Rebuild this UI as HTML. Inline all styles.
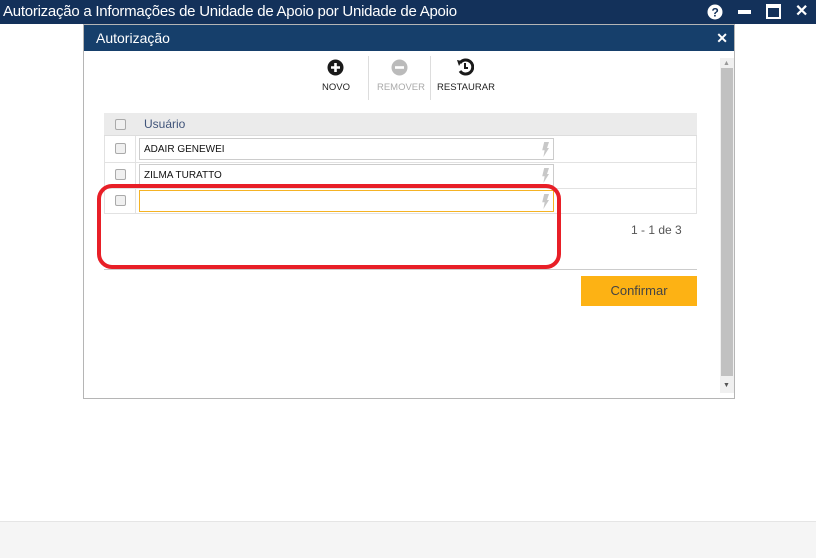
<!DOCTYPE html>
<html><head><meta charset="utf-8"><style>
*{box-sizing:border-box;margin:0;padding:0}
body{width:816px;height:558px;position:relative;background:#fff;font-family:"Liberation Sans",sans-serif;overflow:hidden}
.top{position:absolute;left:0;top:0;width:816px;height:24px;background:#13315a;color:#fff;font-size:15px;line-height:23px;padding-left:3px;letter-spacing:-0.25px}
.dlg{position:absolute;left:83px;top:24px;width:652px;height:375px;border:1px solid #b5b5b5;background:#fff}
.hd{position:absolute;left:0;top:0;width:650px;height:26px;background:#163f6b;color:#fff;font-size:14px;line-height:26px;padding-left:12px}
.abs{position:absolute}
.tb{font-size:9.5px;color:#222;text-align:center}
.cb{position:absolute;width:11px;height:11px;border:1px solid #aaa;border-radius:2px;background:#f0f0f0}
.inp{position:absolute;left:139px;width:415px;height:22px;border:1px solid #ccc;font-size:10px;line-height:22px;padding-left:4px;color:#111}
.bolt{position:absolute;right:4px;top:3px;width:8px;height:15px;background:#c8c8c8;clip-path:polygon(40% 0,100% 0,75% 40%,100% 40%,30% 100%,45% 55%,15% 55%)}
</style></head><body>
<div class="top">Autorização a Informações de Unidade de Apoio por Unidade de Apoio
<svg class="abs" style="left:707px;top:4px" width="16" height="16"><circle cx="8" cy="8" r="7.5" fill="#fff"/><text x="8" y="12.5" font-size="12" font-weight="bold" fill="#13315a" text-anchor="middle" font-family="Liberation Sans">?</text></svg>
<div class="abs" style="left:738px;top:10px;width:13px;height:4px;background:#fff"></div>
<div class="abs" style="left:766px;top:4px;width:15px;height:15px;border:2px solid #fff;border-top-width:4px"></div>
<div class="abs" style="left:795px;top:0;font-weight:bold;font-size:16px">✕</div>
</div>
<div class="dlg">
<div class="hd">Autorização<span class="abs" style="right:6px;top:0;font-weight:bold;font-size:14px">✕</span></div>
<svg class="abs" style="left:243px;top:34px" width="17" height="17"><circle cx="8.5" cy="8.5" r="8" fill="#1a1a1a"/><path d="M8.5 4v9M4 8.5h9" stroke="#fff" stroke-width="2.6"/></svg>
<div class="abs tb" style="left:236px;top:57px;width:32px">NOVO</div>
<div class="abs" style="left:284px;top:31px;width:1px;height:44px;background:#ddd"></div>
<svg class="abs" style="left:307px;top:34px" width="17" height="17"><circle cx="8.5" cy="8.5" r="8" fill="#bbb"/><path d="M4 8.5h9" stroke="#fff" stroke-width="2.6"/></svg>
<div class="abs tb" style="left:292px;top:57px;width:50px;color:#aaa">REMOVER</div>
<div class="abs" style="left:346px;top:31px;width:1px;height:44px;background:#ddd"></div>
<svg class="abs" style="left:372px;top:33px" width="18" height="18"><path d="M4 5A7 7 0 1 1 4 13" fill="none" stroke="#1a1a1a" stroke-width="3"/><path d="M1 2l5 1-3 5z" fill="#1a1a1a"/><path d="M9 5v5h3" fill="none" stroke="#1a1a1a" stroke-width="2"/></svg>
<div class="abs tb" style="left:352px;top:57px;width:60px">RESTAURAR</div>
<div class="abs" style="left:636px;top:33px;width:14px;height:335px;background:#f0f0f0"></div>
<div class="abs" style="left:637px;top:43px;width:12px;height:308px;background:#c1c1c1"></div>
<div class="abs" style="left:639px;top:35px;font-size:7px;color:#999">▲</div>
<div class="abs" style="left:639px;top:357px;font-size:7px;color:#555">▼</div>
</div>
<div class="abs" style="left:104px;top:113px;width:593px;height:23px;background:#ebebeb;border-bottom:1px solid #ddd"></div>
<div class="cb" style="left:115px;top:119px"></div>
<div class="abs" style="left:144px;top:117px;font-size:12px;color:#40547a">Usuário</div>
<div class="abs" style="left:104px;top:136px;width:593px;height:78px;border:1px solid #e2e2e2;border-top:none"></div>
<div class="abs" style="left:104px;top:162px;width:593px;height:1px;background:#e2e2e2"></div>
<div class="abs" style="left:104px;top:188px;width:593px;height:1px;background:#e2e2e2"></div>
<div class="abs" style="left:135px;top:136px;width:1px;height:78px;background:#e2e2e2"></div>
<div class="cb" style="left:115px;top:143px"></div>
<div class="cb" style="left:115px;top:169px"></div>
<div class="cb" style="left:115px;top:195px"></div>
<div class="inp" style="top:138px">ADAIR GENEWEI<div class="bolt"></div></div>
<div class="inp" style="top:164px">ZILMA TURATTO<div class="bolt"></div></div>
<div class="inp" style="top:190px;border-color:#f5b324"><div class="bolt"></div></div>
<div class="abs" style="left:631px;top:223px;font-size:12px;color:#555">1 - 1 de 3</div>
<div class="abs" style="left:104px;top:269px;width:593px;height:1px;background:#ccc"></div>
<div class="abs" style="left:581px;top:276px;width:116px;height:30px;background:#fdb214;color:#444;font-size:13px;line-height:30px;text-align:center">Confirmar</div>
<div class="abs" style="left:97px;top:184px;width:464px;height:85px;border:4px solid #e81f27;border-radius:15px"></div>
<div class="abs" style="left:0;top:521px;width:816px;height:37px;background:#f5f5f5;border-top:1px solid #e5e5e5"></div>
</body></html>
